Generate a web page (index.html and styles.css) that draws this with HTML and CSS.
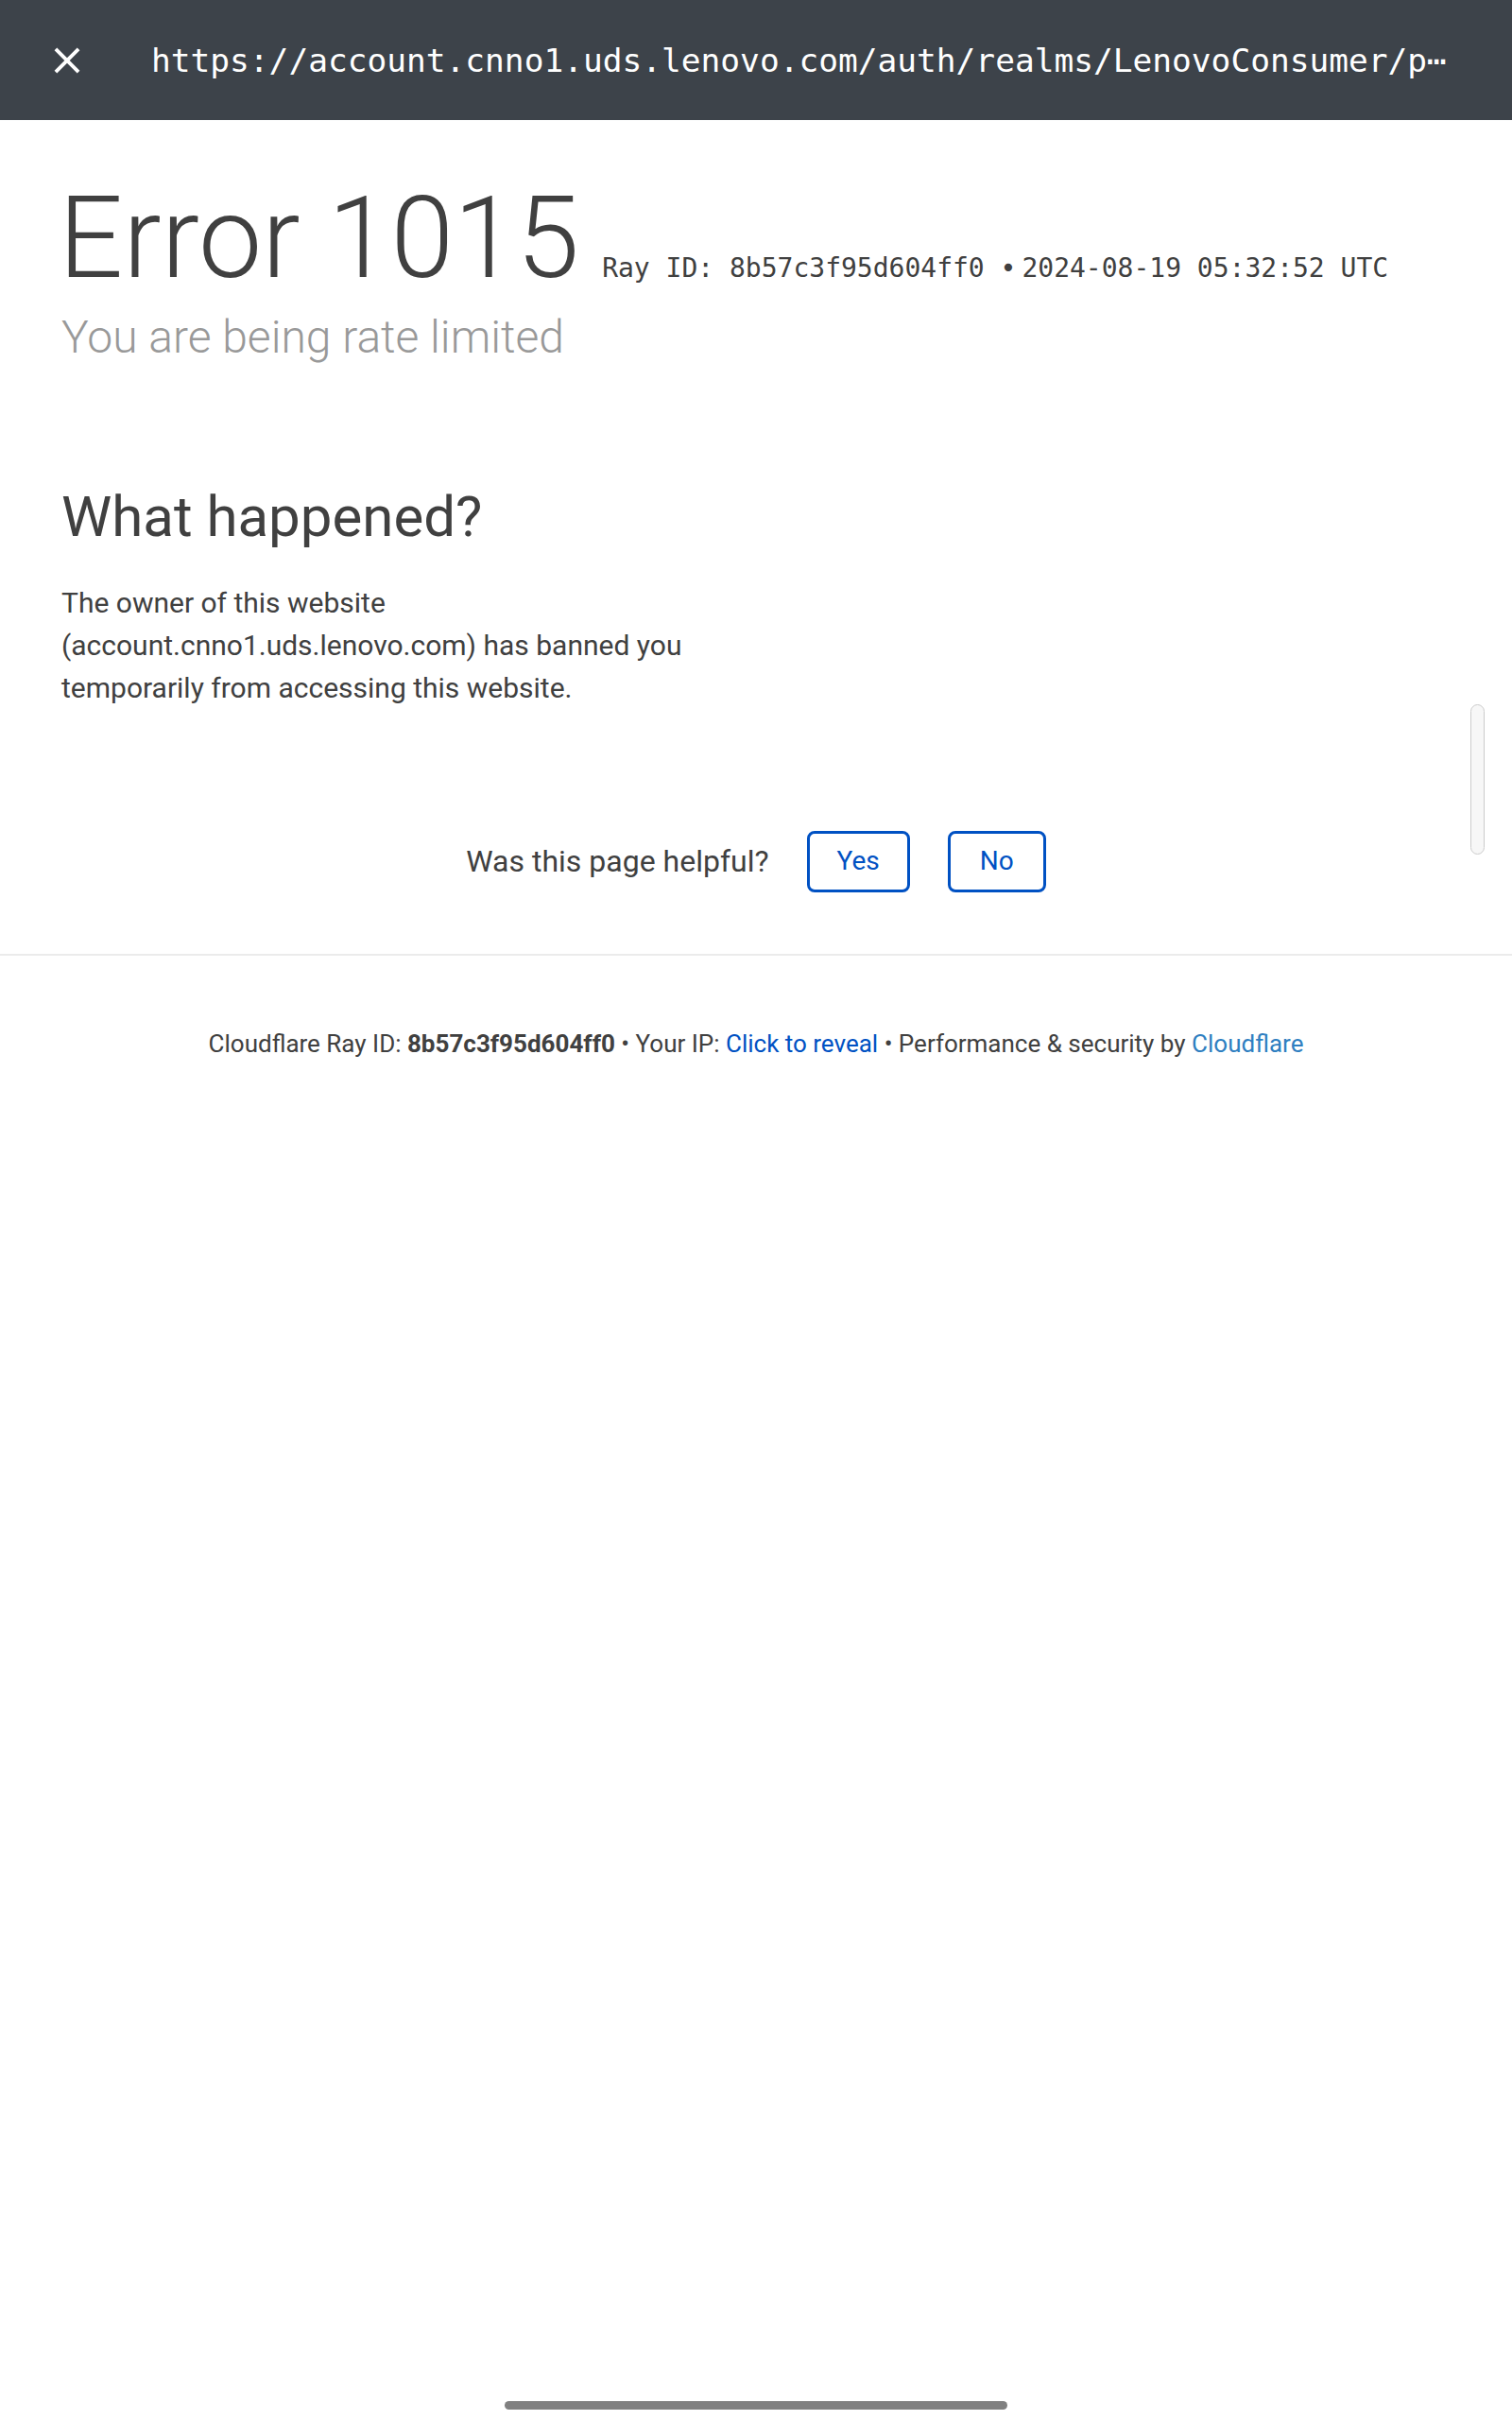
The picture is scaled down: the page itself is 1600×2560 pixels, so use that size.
FILE: index.html
```html
<!DOCTYPE html>
<html lang="en">
<head>
<meta charset="utf-8">
<title>Attention Required! | Cloudflare</title>
<link rel="stylesheet" href="styles.css">
</head>
<body>
<div class="screen">
  <header class="topbar">
    <svg class="close-icon" viewBox="0 0 24 24" width="46" height="46" aria-hidden="true">
      <path fill="#ffffff" d="M19 6.41L17.59 5 12 10.59 6.41 5 5 6.41 10.59 12 5 17.59 6.41 19 12 13.41 17.59 19 19 17.59 13.41 12z"/>
    </svg>
    <div class="url">https://account.cnno1.uds.lenovo.com/auth/realms/LenovoConsumer/p⋯</div>
  </header>

  <main class="content">
    <section class="headline">
      <div class="title-row">
        <h1 class="error-title">Error 1015</h1>
        <span class="ray-meta">Ray ID: 8b57c3f95d604ff0 <span class="sep">•</span>2024-08-19 05:32:52 UTC</span>
      </div>
      <h2 class="subheadline">You are being rate limited</h2>
    </section>

    <section class="columns">
      <div class="column">
        <h2 class="section-title">What happened?</h2>
        <p class="section-text">The owner of this website (account.cnno1.uds.lenovo.com) has banned you temporarily from accessing this website.</p>
      </div>
      <div class="column"></div>
    </section>

    <section class="feedback">
      <span class="feedback-label">Was this page helpful?</span>
      <button class="feedback-btn btn-yes" type="button">Yes</button>
      <button class="feedback-btn btn-no" type="button">No</button>
    </section>
  </main>

  <footer class="footer">
    <p class="footer-text">Cloudflare Ray ID: <strong class="footer-ray">8b57c3f95d604ff0</strong> • Your IP: <a class="reveal" href="#">Click to reveal</a> • Performance &amp; security by <a class="cf-link" href="#">Cloudflare</a></p>
  </footer>

  <div class="scroll-thumb"></div>
  <div class="gesture-bar"></div>
</div>
</body>
</html>
```

FILE: styles.css
```css
* {
  box-sizing: border-box;
}

html, body {
  margin: 0;
  padding: 0;
  background: #ffffff;
}

body {
  font-family: Roboto, "Liberation Sans", Arial, sans-serif;
  color: #404040;
}

.screen {
  position: relative;
  width: 1600px;
  height: 2560px;
  overflow: hidden;
  background: #ffffff;
}

/* ---------- top URL bar ---------- */
.topbar {
  height: 127px;
  background: #3d434a;
  display: flex;
  align-items: center;
  padding-left: 48px;
}

.close-icon {
  flex: none;
  display: block;
}

.url {
  margin-left: 66px;
  font-family: "DejaVu Sans Mono", "Liberation Mono", monospace;
  font-size: 34.5px;
  color: #ffffff;
  white-space: nowrap;
  line-height: 1;
  padding-top: 2px;
}

/* ---------- main content ---------- */
.content {
  padding: 0 65px;
}

.headline {
  padding-top: 65px;
}

.title-row {
  display: flex;
  align-items: baseline;
}

.error-title {
  margin: 0;
  font-size: 120px;
  font-weight: 300;
  line-height: 1;
  color: #404040;
  margin-left: -3px;
}

.ray-meta {
  margin-left: 24px;
  font-family: "DejaVu Sans Mono", "Liberation Mono", monospace;
  font-size: 28px;
  color: #404040;
  white-space: nowrap;
}

.sep {
  margin-right: 6px;
}

.subheadline {
  margin: 16px 0 0;
  font-size: 48px;
  font-weight: 300;
  line-height: 1.2;
  color: #999999;
}

.columns {
  display: grid;
  grid-template-columns: 1fr 1fr;
  gap: 70px;
  margin-top: 125px;
}

.section-title {
  margin: 0;
  font-size: 60px;
  font-weight: 400;
  line-height: 1.2;
  color: #404040;
}

.section-text {
  margin: 32px 0 0;
  font-size: 30px;
  line-height: 45px;
  color: #404040;
}

/* ---------- feedback ---------- */
.feedback {
  display: flex;
  justify-content: center;
  align-items: center;
  gap: 40px;
  margin-top: 129px;
  padding-bottom: 65px;
}

.feedback-label {
  font-size: 32px;
  color: #404040;
}

.feedback-btn {
  height: 65px;
  padding: 0 29px;
  background: #ffffff;
  border: 3px solid #0051c3;
  border-radius: 8px;
  font-family: Roboto, "Liberation Sans", Arial, sans-serif;
  font-size: 28px;
  color: #0051c3;
  line-height: 1;
}

.btn-no {
  padding: 0 31px;
}

/* ---------- footer ---------- */
.footer {
  border-top: 2px solid #ebebeb;
  padding-top: 78px;
}

.footer-text {
  margin: 0;
  text-align: center;
  font-size: 26px;
  line-height: 1.2;
  color: #404040;
}

.footer-ray {
  font-weight: 700;
}

.reveal {
  color: #0051c3;
  text-decoration: none;
}

.cf-link {
  color: #2f7fc1;
  text-decoration: none;
}

/* ---------- overlays ---------- */
.scroll-thumb {
  position: absolute;
  left: 1556px;
  top: 745px;
  width: 15px;
  height: 159px;
  background: #f7f7f7;
  border: 1.5px solid #cccccc;
  border-radius: 8px;
}

.gesture-bar {
  position: absolute;
  left: 534px;
  top: 2540px;
  width: 532px;
  height: 9px;
  background: #808080;
  border-radius: 5px;
}
```
